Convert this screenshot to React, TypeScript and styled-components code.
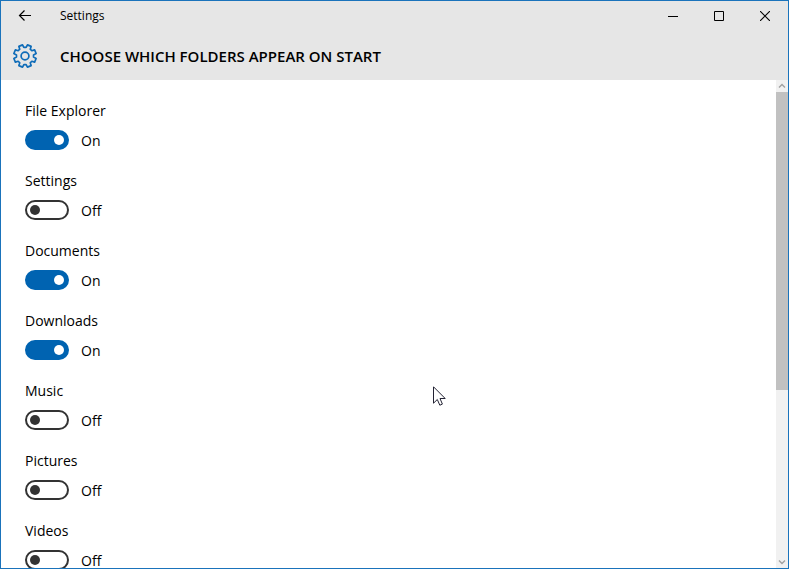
import React, { useState } from "react";
import styled, { createGlobalStyle } from "styled-components";

const GlobalStyle = createGlobalStyle`
  * { box-sizing: border-box; }
  html, body { margin: 0; }
  body {
    overflow: hidden;
    font-family: "Open Sans", "Noto Sans", sans-serif;
    color: #000;
  }
  button { font: inherit; color: inherit; }
`;

const Window = styled.div`
  position: relative;
  display: flex;
  flex-direction: column;
  height: 100vh;
  border: 1px solid #1a73bb;
  background: #fff;
  overflow: hidden;
`;

const Header = styled.header`
  flex: none;
  background: #e6e6e6;
`;

const TitleBar = styled.div`
  display: flex;
  align-items: center;
  height: 30px;
`;

const CaptionButton = styled.button<{ $width: number }>`
  display: flex;
  align-items: center;
  justify-content: center;
  width: ${(p) => p.$width}px;
  height: 30px;
  padding: 0;
  border: 0;
  background: transparent;
`;

const AppName = styled.span`
  flex: 1;
  padding-left: 11px;
  font-size: 12px;
  line-height: 16px;
`;

const PageHeading = styled.div`
  display: flex;
  align-items: center;
  gap: 21px;
  height: 49px;
  padding: 0 10px;
`;

const Title = styled.h1`
  margin: 0;
  font-size: 15px;
  font-weight: 600;
  line-height: 20px;
  white-space: nowrap;
`;

const Body = styled.div`
  display: flex;
  flex: 1;
  min-height: 0;
`;

const FolderList = styled.main`
  flex: 1;
  min-width: 0;
  padding: 20px 24px;
  overflow: hidden;
`;

const FolderRow = styled.div`
  height: 70px;
  font-size: 14px;
  line-height: 22px;
`;

const FolderLabel = styled.label`
  display: block;
  margin-bottom: 8px;
`;

const SwitchLine = styled.div`
  display: flex;
  align-items: flex-start;
  gap: 12px;
`;

const Switch = styled.input`
  appearance: none;
  display: flex;
  align-items: center;
  width: 44px;
  height: 20px;
  margin: 0;
  padding: 0 3px;
  border: 2px solid #333;
  border-radius: 10px;
  background: #fff;

  &::before {
    content: "";
    width: 10px;
    height: 10px;
    border-radius: 50%;
    background: #333;
  }

  &:checked {
    justify-content: flex-end;
    border-color: #0063b1;
    background: #0063b1;
  }

  &:checked::before { background: #fff; }
`;

const ScrollBar = styled.div`
  display: flex;
  flex-direction: column;
  flex: none;
  width: 12px;
  background: #f1f1f1;
`;

const ScrollArrow = styled.button`
  display: flex;
  align-items: center;
  justify-content: center;
  flex: none;
  width: 12px;
  height: 12px;
  padding: 0;
  border: 0;
  background: transparent;
`;

const ScrollThumb = styled.div`
  flex: 298;
  background: #c1c1c1;
`;

const ScrollTrack = styled.div`
  flex: 166;
`;

const Pointer = styled.svg`
  position: absolute;
  left: 432px;
  top: 385px;
  pointer-events: none;
`;

const gearPath = (() => {
  const outer = 11.4;
  const inner = 8.6;
  const points: string[] = [];
  for (let i = 0; i < 8; i++) {
    const mid = 22.5 + i * 45;
    [[-15, inner], [-10, outer], [10, outer], [15, inner]].forEach(([offset, r]) => {
      const a = ((mid + offset) * Math.PI) / 180;
      points.push(`${(14 + r * Math.sin(a)).toFixed(2)} ${(14 - r * Math.cos(a)).toFixed(2)}`);
    });
  }
  return `M${points.join("L")}Z`;
})();

const GearIcon = () => (
  <svg width="28" height="28" viewBox="0 0 28 28" fill="none" stroke="#0f6cb8" strokeWidth="1.7" strokeLinejoin="round" aria-hidden="true">
    <path d={gearPath} />
    <circle cx="14" cy="14" r="3.9" />
  </svg>
);

const folders = [
  { name: "File Explorer", shown: true },
  { name: "Settings", shown: false },
  { name: "Documents", shown: true },
  { name: "Downloads", shown: true },
  { name: "Music", shown: false },
  { name: "Pictures", shown: false },
  { name: "Videos", shown: false },
];

function Folder({ name, shown }: { name: string; shown: boolean }) {
  const [on, setOn] = useState(shown);
  const id = name.toLowerCase().replace(" ", "-");
  return (
    <FolderRow>
      <FolderLabel htmlFor={id}>{name}</FolderLabel>
      <SwitchLine>
        <Switch id={id} type="checkbox" role="switch" checked={on} onChange={() => setOn(!on)} />
        <span>{on ? "On" : "Off"}</span>
      </SwitchLine>
    </FolderRow>
  );
}

export default function App() {
  return (
    <Window>
      <GlobalStyle />
      <Header>
        <TitleBar>
          <CaptionButton $width={48} aria-label="Back">
            <svg width="14" height="12" viewBox="0 0 14 12" fill="none" stroke="#000" strokeWidth="1.2">
              <path d="M13 5.5H1.5M6.5 .5L1.5 5.5L6.5 10.5" />
            </svg>
          </CaptionButton>
          <AppName>Settings</AppName>
          <CaptionButton $width={46} aria-label="Minimize">
            <svg width="10" height="10"><path d="M0 5.5H10" stroke="#000" /></svg>
          </CaptionButton>
          <CaptionButton $width={46} aria-label="Maximize">
            <svg width="10" height="10"><path d="M.5 .5H9.5V9.5H.5Z" stroke="#000" fill="none" /></svg>
          </CaptionButton>
          <CaptionButton $width={46} aria-label="Close">
            <svg width="10" height="10"><path d="M0 0L10 10M10 0L0 10" stroke="#000" strokeWidth="1.1" /></svg>
          </CaptionButton>
        </TitleBar>
        <PageHeading>
          <GearIcon />
          <Title>CHOOSE WHICH FOLDERS APPEAR ON START</Title>
        </PageHeading>
      </Header>
      <Body>
        <FolderList>
          {folders.map((f) => <Folder key={f.name} {...f} />)}
        </FolderList>
        <ScrollBar>
          <ScrollArrow aria-label="Scroll up">
            <svg width="8" height="6" fill="none" stroke="#a0a0a0" strokeWidth="1.4"><path d="M1 4.5L4 1.5L7 4.5" /></svg>
          </ScrollArrow>
          <ScrollThumb />
          <ScrollTrack />
          <ScrollArrow aria-label="Scroll down">
            <svg width="8" height="6" fill="none" stroke="#a0a0a0" strokeWidth="1.4"><path d="M1 1.5L4 4.5L7 1.5" /></svg>
          </ScrollArrow>
        </ScrollBar>
      </Body>
      <Pointer width="14" height="21" viewBox="0 0 14 21" aria-hidden="true">
        <path d="M.5 .8V17.2L4.3 13.5L6.8 19.2L9.4 18.1L7 12.5H12.2Z" fill="#fff" stroke="#223" />
      </Pointer>
    </Window>
  );
}
